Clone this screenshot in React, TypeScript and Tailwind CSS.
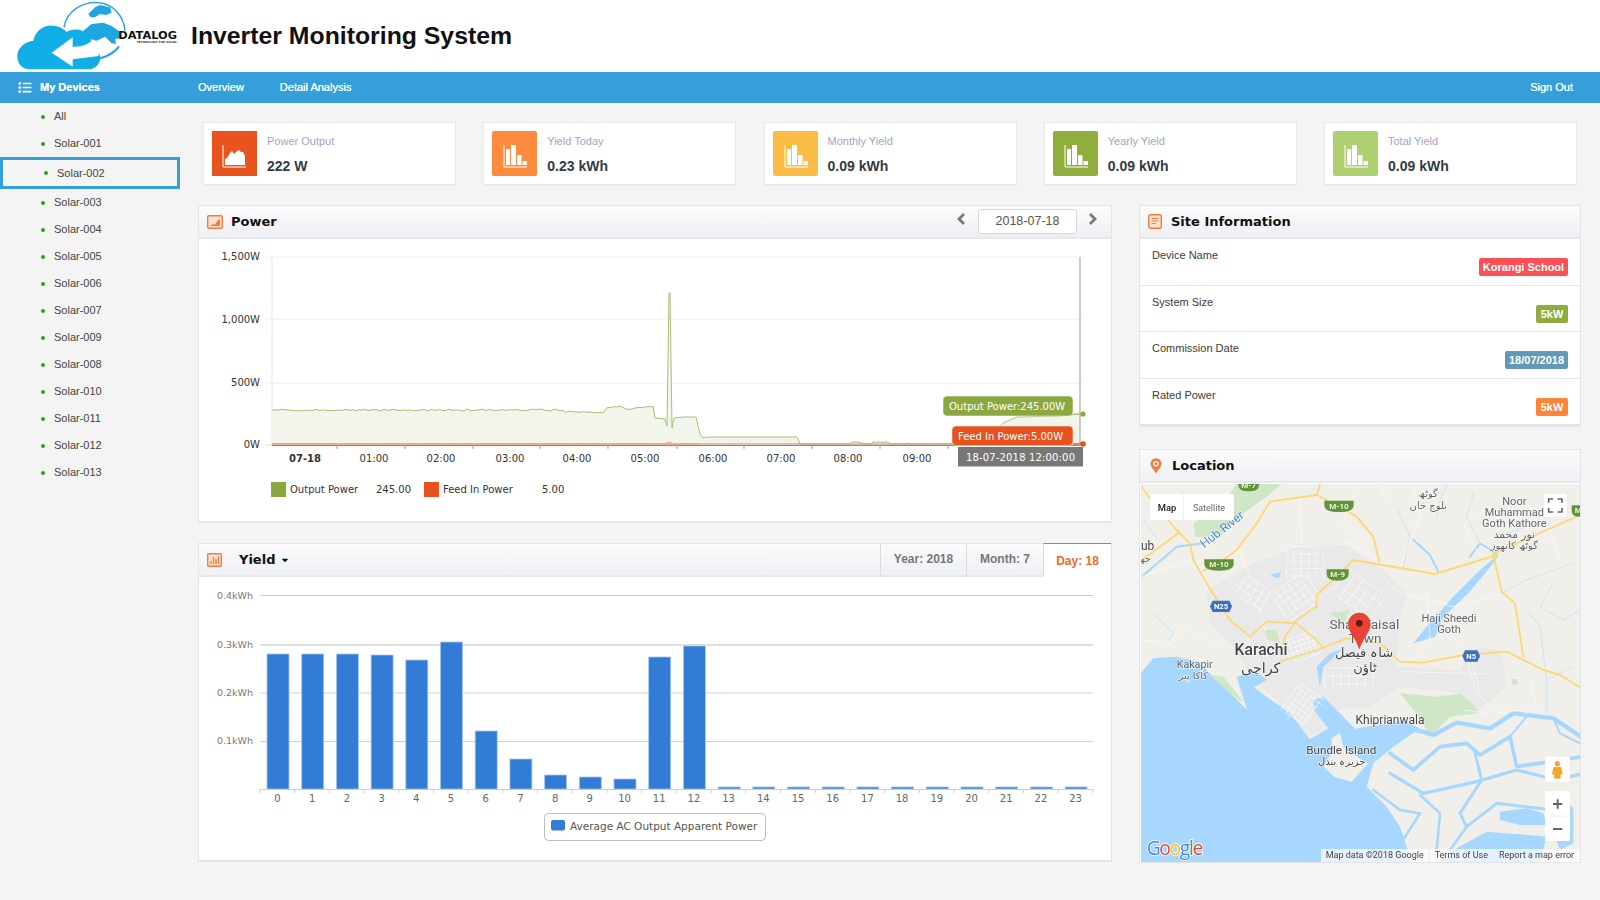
import React from "react";
import { FaList, FaCaretDown } from "react-icons/fa";

const DEJAVU = "'DejaVu Sans', sans-serif";
const ROBOTO = "Roboto, 'DejaVu Sans', sans-serif";

const devices = ["All","Solar-001","Solar-002","Solar-003","Solar-004","Solar-005","Solar-006","Solar-007","Solar-009","Solar-008","Solar-010","Solar-011","Solar-012","Solar-013"];

function Logo() {
  return (
    <svg viewBox="0 0 570 216" className="w-[190px] h-[72px] shrink-0">
      <path d="M192 82 C200 30 250 5 295 8 C340 10 372 50 375 92" fill="none" stroke="#2aa7e0" strokeWidth="4.5" />
      <path d="M265 42 L285 22 L300 15 L330 22 L335 38 L318 45 L300 42 L285 52 L272 52 Z" fill="#1fa6e0" />
      <path d="M250 92 L275 72 L310 68 L335 78 L360 95 L366 112 L345 118 L348 132 L335 130 L315 110 L290 122 L270 118 L255 108 Z" fill="#1fa6e0" />
      <path d="M300 178 C325 172 345 160 360 140 L354 138 C340 155 322 166 300 172 Z" fill="#1fa6e0" />
      <path d="M90 208 C65 208 52 190 52 168 C52 145 72 125 100 122 C105 95 130 75 155 77 C175 77 190 85 200 96 C215 85 250 85 265 108 C275 122 280 135 282 150 L300 165 C305 185 290 208 265 208 Z" fill="#11ade6" />
      <path d="M155 158 L218 112 L218 140 C240 142 262 136 280 118 L284 126 C290 140 298 150 296 168 L218 178 L218 200 Z" fill="#fff" />
      <text x="355" y="117" fontFamily={DEJAVU} fontWeight="700" fontSize="33" fill="#111" textLength="176" lengthAdjust="spacingAndGlyphs">DATALOG</text>
      <text x="410" y="129" fontFamily={DEJAVU} fontWeight="700" fontSize="8" fill="#333" textLength="120" lengthAdjust="spacingAndGlyphs">TECHNOLOGY FOR SOLAR</text>
    </svg>
  );
}

function AreaIcon() {
  return (
    <svg viewBox="0 0 45 45" className="w-[45px] h-[45px]">
      <path d="M11 14 V36 H34" stroke="#fff" strokeWidth="1" fill="none" />
      <path d="M13 34 V28 L15 27 L18 22 L20 20 L22 23 L25 20 L27 19 L29 21 L31 21 L33 25 V34 Z" fill="#fff" />
    </svg>
  );
}
function BarIcon() {
  return (
    <svg viewBox="0 0 45 45" className="w-[45px] h-[45px]">
      <path d="M12 14 V36 H35" stroke="#fff" strokeWidth="1" fill="none" />
      <rect x="14" y="18" width="4" height="16" fill="#fff" />
      <rect x="19" y="14" width="5" height="20" fill="#fff" />
      <rect x="25" y="24" width="4.5" height="10" fill="#fff" />
      <rect x="30.5" y="30" width="4.5" height="4" fill="#fff" />
    </svg>
  );
}

function StatCard({ color, label, value, area, rounded }: { color: string; label: string; value: string; area?: boolean; rounded?: boolean }) {
  return (
    <div className="w-[253px] h-[64px] bg-white border border-[#e8e8ee] border-b-2 pl-2 pt-2 flex gap-[10px]">
      <div className={"w-[45px] h-[45px] shrink-0 " + color + (rounded ? " rounded-[2px]" : "")}>{area ? <AreaIcon /> : <BarIcon />}</div>
      <div>
        <div className="text-[11px] leading-[14px] mt-[3px] text-[#a3a3c8]">{label}</div>
        <div className="text-[14px] leading-[16px] mt-[10px] font-bold text-[#333a45]">{value}</div>
      </div>
    </div>
  );
}

function PanelHeader({ children }: { children: React.ReactNode }) {
  return (
    <div className="h-[33px] flex items-center bg-linear-to-b from-[#fbfbfc] to-[#eff0f4] border-b-2 border-[#e6e8ee] shrink-0">
      {children}
    </div>
  );
}

const titleCls = "[font-family:'DejaVu_Sans',sans-serif] font-bold text-[13px] text-[#111] leading-none";

function hash(i: number) {
  const s = Math.sin(i * 12.9898) * 43758.5453;
  return s - Math.floor(s);
}

const powerPts: [number, number][] = (() => {
  const pts: [number, number][] = [];
  const base: [number, number][] = [[272,410],[560,410],[567,412],[603,412],[608,407],[620,407],[625,409],[640,408],[653,406]];
  for (let s = 0; s < base.length - 1; s++) {
    const [x0, y0] = base[s];
    const [x1, y1] = base[s + 1];
    for (let x = x0; x < x1; x += 3) {
      const t = (x - x0) / (x1 - x0);
      pts.push([x, y0 + (y1 - y0) * t + (hash(x) - 0.5) * 1.8]);
    }
  }
  const rest: [number, number][] = [[653,406],[655,418],[665,419],[667,426],[669,293],[670,293],[672,428],[674,418],[684,417],[696,417],[700,434],[703,438],[708,437],[730,437],[760,437],[797,437],[800,444],[850,444],[852,442],[858,442],[864,444],[871,444],[873,442],[888,442],[890,444],[905,444],[907,443],[909,444],[985,444],[1003,423],[1017,417],[1060,416],[1080,414]];
  return pts.concat(rest);
})();

function PowerChart() {
  const line = powerPts.map(p => p.join(",")).join(" ");
  const ticks = [337,405,473,540,608,677,744,812,880,948];
  const times: [string, number][] = [["01:00",374],["02:00",441],["03:00",510],["04:00",577],["05:00",645],["06:00",713],["07:00",781],["08:00",848],["09:00",917]];
  return (
    <svg viewBox="199 239 912 283" className="w-[912px] h-[283px] block" fontFamily={DEJAVU} fontSize="10">
      {[257,319,383].map(y => <line key={y} x1="266" x2="1083" y1={y} y2={y} stroke="#eeeeee" strokeWidth="1" />)}
      <line x1="266" x2="272" y1="445" y2="445" stroke="#ddd" />
      <line x1="272" x2="272" y1="257" y2="445" stroke="#e4e4e4" />
      <polygon points={`272,445 ${line} 1080,445`} fill="#f2f5ec" />
      <polyline points={line} fill="none" stroke="#a9c077" strokeWidth="1" />
      <line x1="272" x2="700" y1="444" y2="444" stroke="#f2a98c" strokeWidth="2" />
      <path d="M700 444 H1080" stroke="#c98a6b" strokeWidth="1" />
      <path d="M664 444 L669 442 L674 444" stroke="#f2a98c" fill="none" />
      <line x1="272" x2="1080" y1="445.5" y2="445.5" stroke="#888" strokeWidth="1" />
      {ticks.map(x => <line key={x} x1={x} x2={x} y1="445" y2="449" stroke="#999" />)}
      <line x1="1080" x2="1080" y1="257" y2="446" stroke="#bbb" strokeWidth="1.5" />
      <g fill="#333" textAnchor="end">
        <text x="260" y="260">1,500W</text>
        <text x="260" y="323">1,000W</text>
        <text x="260" y="386">500W</text>
        <text x="260" y="448">0W</text>
      </g>
      <g fill="#333" textAnchor="middle">
        <text x="305" y="462" fontWeight="700">07-18</text>
        {times.map(([t, x]) => <text key={t} x={x} y="462">{t}</text>)}
      </g>
      <rect x="271" y="482" width="15" height="15" fill="#8ba840" />
      <text x="290" y="493" fill="#333">Output Power</text>
      <text x="376" y="493" fill="#333">245.00</text>
      <rect x="424" y="482" width="15" height="15" fill="#e8521e" />
      <text x="443" y="493" fill="#333">Feed In Power</text>
      <text x="542" y="493" fill="#333">5.00</text>

      <rect x="943" y="396" width="130" height="20" rx="4" fill="#8ba840" stroke="#fff" strokeWidth="0.5" />
      <text x="949" y="410" fill="#fff">Output Power:245.00W</text>
      <line x1="1073" x2="1083" y1="414" y2="414" stroke="#a9c077" />
      <circle cx="1083" cy="414" r="2.6" fill="#8ba840" />
      <rect x="952" y="426" width="121" height="19.5" rx="4" fill="#e8521e" stroke="#fff" strokeWidth="0.5" />
      <text x="958" y="439.5" fill="#fff">Feed In Power:5.00W</text>
      <line x1="1073" x2="1083" y1="444" y2="444" stroke="#e8521e" />
      <circle cx="1083" cy="444" r="2.8" fill="#e8521e" />
      <rect x="958" y="447" width="125" height="19.5" fill="#777" />
      <text x="966" y="460.5" fill="#fff" textLength="109">18-07-2018 12:00:00</text>
    </svg>
  );
}

const yieldBars = [654,654,654,655,660,642,731,759,775,777,779,657,646,787,787,787,787,787,787,787,787,787,787,787];

function YieldChart() {
  const x0 = 260, step = 34.7;
  return (
    <svg viewBox="199 577 912 284" className="w-[912px] h-[284px] block" fontFamily={DEJAVU} fontSize="9.5">
      <line x1="260" x2="1093" y1="595.5" y2="595.5" stroke="#cccccc" />
      <line x1="260" x2="1093" y1="645" y2="645" stroke="#d4d4d4" strokeWidth="1.3" />
      <line x1="260" x2="1093" y1="693" y2="693" stroke="#e0e0e0" strokeWidth="1.5" />
      <line x1="260" x2="1093" y1="741.5" y2="741.5" stroke="#d0d0d0" />
      <g fill="#777" textAnchor="end">
        <text x="253" y="598.5">0.4kWh</text>
        <text x="253" y="648">0.3kWh</text>
        <text x="253" y="696">0.2kWh</text>
        <text x="253" y="744">0.1kWh</text>
      </g>
      {yieldBars.map((top, i) => (
        <rect key={i} x={x0 + step * i + 7} y={top} width="22" height={789 - top} fill="#337cd6" stroke="#a9c6ec" strokeWidth="0.8" />
      ))}
      <line x1="260" x2="1093" y1="789.5" y2="789.5" stroke="#c0d0e0" />
      {Array.from({ length: 25 }, (_, i) => (
        <line key={i} x1={x0 + step * i} x2={x0 + step * i} y1="789" y2="793" stroke="#c0d0e0" />
      ))}
      <g fill="#666" textAnchor="middle" fontSize="10">
        {yieldBars.map((_, i) => <text key={i} x={x0 + step * i + 17.5} y="802">{i}</text>)}
      </g>
      <rect x="544.5" y="813.5" width="221" height="27" rx="4" fill="#fff" stroke="#bbb" />
      <rect x="551" y="820" width="14" height="10.5" rx="2" fill="#337cd6" />
      <text x="570" y="830" fontSize="10.5" fill="#555">Average AC Output Apparent Power</text>
    </svg>
  );
}

function cluster(cx: number, cy: number, w: number, h: number, step: number, angle: number) {
  const out: React.ReactNode[] = [];
  for (let x = -w / 2; x <= w / 2; x += step) out.push(<line key={"v" + x} x1={x} x2={x} y1={-h / 2 + (hash(x) * h) / 5} y2={h / 2 - (hash(x + 3) * h) / 5} />);
  for (let y = -h / 2; y <= h / 2; y += step) out.push(<line key={"h" + y} x1={-w / 2 + (hash(y) * w) / 5} x2={w / 2 - (hash(y + 3) * w) / 5} y1={y} y2={y} />);
  return <g key={`${cx}-${cy}`} transform={`translate(${cx},${cy}) rotate(${angle})`}>{out}</g>;
}

function Shield({ x, y, w, text }: { x: number; y: number; w: number; text: string }) {
  return (
    <g>
      <path d={`M${x} ${y} H${x + w} V${y + 14} Q${x + w} ${y + 34} ${x + w / 2} ${y + 34} Q${x} ${y + 34} ${x} ${y + 14} Z`} fill="#5f9438" />
      <text x={x + w / 2} y={y + 24} textAnchor="middle" fontSize="24" fontWeight="700" fill="#e8f3dc" fontFamily={ROBOTO}>{text}</text>
    </g>
  );
}
function Hex({ x, y, w, text }: { x: number; y: number; w: number; text: string }) {
  return (
    <g>
      <path d={`M${x + 8} ${y} H${x + w - 8} L${x + w} ${y + 17} L${x + w - 8} ${y + 34} H${x + 8} L${x} ${y + 17} Z`} fill="#3a6fc4" />
      <text x={x + w / 2} y={y + 25} textAnchor="middle" fontSize="23" fontWeight="700" fill="#fff" fontFamily={ROBOTO}>{text}</text>
    </g>
  );
}
function L({ x, y, s = 30, t, fill = "#5f6368", weight = 400, anchor = "middle", rot }: { x: number; y: number; s?: number; t: string; fill?: string; weight?: number; anchor?: "middle" | "start"; rot?: number }) {
  return (
    <text x={x} y={y} fontSize={s} fontWeight={weight} fill={fill} textAnchor={anchor} stroke="#ffffff" strokeOpacity="0.7" strokeWidth="4" paintOrder="stroke" transform={rot ? `rotate(${rot} ${x} ${y})` : undefined}>{t}</text>
  );
}

function MapView() {
  const sea = "#a7d7fe";
  return (
    <svg viewBox="93 12 1317 1134" preserveAspectRatio="none" className="w-[439px] h-[378px] block blur-[0.35px]" fontFamily={ROBOTO}>
      <rect x="93" y="12" width="1317" height="1134" fill="#f1efea" />
      <path d="M250 130 L340 70 L380 12 L515 12 L470 50 L400 100 L330 170 L255 170 Z" fill="#cfe7c6" />
      <path d="M870 640 L980 650 L1060 640 L1110 700 L1020 710 L960 770 L920 700 Z" fill="#cfe7c6" />
      <path d="M290 330 L430 250 L560 200 L700 190 L820 270 L890 340 L870 420 L860 560 L1050 570 L1100 500 L1170 510 L1190 620 L1110 690 L1050 640 L870 620 L780 680 L680 690 L650 740 L600 770 L520 680 L430 600 L370 500 L300 430 Z" fill="#e9e9e9" />
      <path d="M660 400 L720 390 L700 430 Z M460 450 L500 450 L510 490 L470 480 Z" fill="#cfe7c6" />
      <rect x="1205" y="597" width="17" height="17" fill="#cfe7c6" />
      <path d="M93 578 L130 535 L200 530 L265 545 L310 590 L412 690 L395 640 L380 590 L440 575 L470 600 L432 622 L470 650 L540 700 L600 778 L655 745 L615 695 L608 660 L640 650 L690 700 L740 752 L790 740 L880 722 L930 745 L850 800 L790 850 L770 920 L830 980 L870 1040 L905 1146 L93 1146 Z" fill={sea} />
      <path d="M665 775 L690 758 L700 800 L740 830 L775 850 L725 905 L672 890 L640 858 L665 820 Z" fill="#f1efea" />
      <path d="M300 585 L340 590 L400 665 L385 660 Z" fill="#cfe7c6" />
      <g transform="translate(690,0)" fill="none" stroke={sea} strokeLinejoin="round" strokeLinecap="round">
        <path strokeWidth="13" d="M20 760 Q150 720 280 765 L350 728 L450 745 L520 700 L640 715 L730 775" />
        <path strokeWidth="11" d="M150 820 L220 870 L300 800 L380 790 L420 825 L510 770 L530 860 L730 830" />
        <path strokeWidth="10" d="M150 880 L250 940 L410 905 L530 870 L650 900 L730 880" />
        <path strokeWidth="9" d="M405 820 L425 900 L360 1000 L380 1040 L470 970 L640 990 L690 980" />
        <path strokeWidth="8" d="M240 945 L300 1000 L290 1110 M100 930 L180 990 L240 1000 L170 1110 M380 1040 L330 1110" />
        <path strokeWidth="6" d="M640 715 L660 760 L720 790 M510 770 L560 710" />
        <path fill={sea} stroke="none" d="M480 995 L560 985 L610 1000 L620 1035 L540 1035 L480 1020 Z M670 990 L700 980 L700 1090 L660 1110 L640 1060 Z M340 1110 L440 1055 L620 1070 L600 1146 L300 1146 Z" />
        <path fill={sea} stroke="none" d="M220 490 L260 440 L340 350 L420 270 L480 220 L450 262 L385 340 L310 410 L285 470 Z" />
        <path strokeWidth="6" d="M220 180 L270 225 L295 275 M470 220 L420 190 L390 230" />
        <path strokeWidth="2.5" opacity="0.6" d="M480 340 L560 300 L700 250 M560 390 L600 440 L620 600 L620 700 M500 160 L590 130 M400 40 L380 110 L420 190 M170 80 L210 170 L190 260 M640 310 L600 380 L670 420 L720 390 M620 600 L700 560 M290 110 L300 60 L320 12" />
      </g>
      <path d="M95 290 L200 200 L280 190" fill="none" stroke={sea} strokeWidth="6" />
      <path d="M100 120 L140 175 M130 400 L190 460 L170 490" fill="none" stroke="#bfe0ff" strokeWidth="2.5" />
      <path d="M480 285 L515 275 L505 295 Z" fill={sea} />
      <path d="M620 560 L660 520 L700 505 L640 560 L630 620 Z" fill={sea} />
      <g stroke="#fbfbfb" strokeWidth="2" fill="none" strokeLinecap="round">
        {cluster(585, 250, 110, 100, 22, 0)}
        {cluster(560, 350, 120, 100, 20, -35)}
        {cluster(580, 500, 100, 70, 14, -20)}
        {cluster(745, 345, 140, 90, 28, 35)}
        {cluster(720, 600, 150, 70, 24, 0)}
        {cluster(575, 680, 90, 110, 16, 35)}
        {cluster(430, 340, 90, 70, 22, 30)}
        <path d="M320 260 L390 210 L420 290 M300 360 L370 300 L450 390 L480 520 M570 50 L575 190 M640 200 L720 190 L800 240 M820 300 L880 340 L1030 380 L1170 345 M950 340 L960 470 L900 560 M1060 500 L1100 640 L1170 700 L1280 680 L1260 600 M880 575 L1130 582 M1080 520 L1110 640 M93 290 L240 240 M93 480 L180 490 L220 440 L330 500 M1100 210 L1060 130 L1150 80 M1310 130 L1350 240 M740 20 L700 130 L790 230 M870 260 L930 110 L910 20 M810 12 L830 60 M1060 690 L1130 700" />
      </g>
      <g stroke="#fcd873" strokeWidth="5.5" fill="none" strokeLinejoin="round" strokeLinecap="round">
        <path d="M95 20 L130 70 L200 150 L240 190 L250 240 L290 310 L360 420 L420 470 L470 425 L560 430 L620 480 L640 505" />
        <path d="M95 240 L150 200 L205 160" />
        <path d="M630 15 L620 45 L480 65 L440 130 L380 210 L320 255 L280 272" />
        <path d="M620 45 L680 75 L740 110 L790 170 L808 245" />
        <path d="M1160 225 L975 282 L730 240 L680 290 L620 345 L620 380 L560 420 L525 470 L520 490" />
        <path d="M1150 225 L1175 335 L1215 370 L1240 530" />
        <path d="M510 545 L620 510 L710 475 L810 490 L870 545 L940 548 L1060 525 L1190 515 L1300 570 L1350 585 L1410 622" />
        <path d="M1150 222 L1310 150 L1410 105" />
      </g>
      <Shield x={385} y={0} w={62} text="M-7" />
      <Shield x={643} y={62} w={88} text="M-10" />
      <Shield x={283} y={238} w={88} text="M-10" />
      <Shield x={650} y={268} w={66} text="M-9" />
      <Shield x={1385} y={76} w={40} text="M" />
      <Hex x={300} y={362} w={66} text="N25" />
      <Hex x={1057} y={511} w={53} text="N5" />
      <L x={763} y={447} s={41} t="Shah Faisal" />
      <L x={765} y={490} s={41} t="Town" />
      <g fontFamily={DEJAVU}>
        <L x={762} y={532} s={39} t="شاہ فیصل" fill="#444" />
        <L x={765} y={576} s={39} t="ٹاؤن" fill="#444" />
        <L x={452} y={578} s={43} t="کراچی" fill="#444" />
        <L x={250} y={597} s={29} t="کاکا پیر" />
        <L x={695} y={856} s={30} t="جزیرہ بندل" fill="#444" />
        <L x={1213} y={175} s={32} t="نور محمد" />
        <L x={1213} y={207} s={30} t="گوٹھ کاتھوز" />
        <L x={955} y={52} s={30} t="گوٹھ" />
        <L x={955} y={87} s={30} t="بلوچ خان" />
        <L x={105} y={246} s={28} t="جھ" />
      </g>
      <L x={453} y={524} s={47} t="Karachi" fill="#444" weight={500} />
      <L x={254} y={563} s={32} t="Kakapir" />
      <L x={1213} y={76} s={33} t="Noor" />
      <L x={1213} y={108} s={33} t="Muhammad" />
      <L x={1213} y={140} s={33} t="Goth Kathore" />
      <L x={1017} y={425} s={33} t="Haji Sheedi" />
      <L x={1017} y={458} s={33} t="Goth" />
      <L x={840} y={733} s={36} t="Khiprianwala" fill="#444" />
      <L x={694} y={822} s={35} t="Bundle Island" fill="#444" />
      <L x={93} y={210} s={36} t="ub" anchor="start" fill="#444" />
      <L x={283} y={205} s={36} t="Hub River" anchor="start" fill="#4a86cf" rot={-38} />
      <path d="M748 506 C736 470 715 456 715 432 A33 33 0 1 1 781 432 C781 456 760 470 748 506 Z" fill="#ea4335" stroke="#c9302a" strokeWidth="1.5" />
      <circle cx="748" cy="430" r="10" fill="#5c1a12" />
      <rect x="120" y="42" width="252" height="78" rx="5" fill="#fff" />
      <line x1="220" x2="220" y1="42" y2="120" stroke="#e6e6e6" strokeWidth="2" />
      <text x="171" y="93" textAnchor="middle" fontSize="28" fontWeight="500" fill="#222">Map</text>
      <text x="297" y="93" textAnchor="middle" fontSize="27" fill="#666">Satellite</text>
      <rect x="1302" y="42" width="68" height="68" fill="#fff" />
      <path d="M1316 68 V57 H1329 M1343 57 H1356 V68 M1316 84 V96 H1329 M1343 96 H1356 V84" fill="none" stroke="#666" strokeWidth="5" />
      <rect x="1305" y="830" width="75" height="75" rx="5" fill="#fff" />
      <circle cx="1342" cy="851" r="8" fill="#f5a623" />
      <path d="M1331 862 H1353 L1357 882 L1351 884 V895 H1333 V884 L1327 882 Z" fill="#f5a623" stroke="#d98c10" strokeWidth="1" />
      <rect x="1305" y="933" width="75" height="150" rx="5" fill="#fff" />
      <line x1="1317" x2="1368" y1="1008" y2="1008" stroke="#e6e6e6" strokeWidth="2" />
      <path d="M1343 958 V986 M1329 972 H1357 M1329 1047 H1357" stroke="#666" strokeWidth="6" />
      <rect x="633" y="1107" width="777" height="39" fill="#ffffff" fillOpacity="0.7" />
      <line x1="958" x2="958" y1="1107" y2="1146" stroke="#e6e6e6" strokeWidth="2" />
      <line x1="1150" x2="1150" y1="1107" y2="1146" stroke="#e6e6e6" strokeWidth="2" />
      <text x="647" y="1133" fontSize="27" fill="#444">Map data ©2018 Google</text>
      <text x="974" y="1133" fontSize="27" fill="#444">Terms of Use</text>
      <text x="1167" y="1133" fontSize="27" fill="#444">Report a map error</text>
      <text x="110" y="1125" fontSize="58" fontWeight="500" fontFamily="'Open Sans', sans-serif" stroke="#fff" strokeWidth="5" paintOrder="stroke" textLength="170">
        <tspan fill="#4285f4">G</tspan><tspan fill="#ea4335">o</tspan><tspan fill="#fbbc05">o</tspan><tspan fill="#4285f4">g</tspan><tspan fill="#34a853">l</tspan><tspan fill="#ea4335">e</tspan>
      </text>
    </svg>
  );
}

function Row({ label, badge, color, h, w }: { label: string; badge: string; color: string; h: string; w: string }) {
  return (
    <div className={"px-[12px] pt-[9px] flex flex-col border-b border-[#e6e6ee] " + h}>
      <div className="h-[10px] text-[11px] leading-[14px] text-[#3b3b3b]">{label}</div>
      <div className={"self-end h-[18px] rounded-[2px] text-white font-bold text-[11px] leading-[18px] text-center " + color + " " + w}>{badge}</div>
    </div>
  );
}

function Chev({ d, cls }: { d: string; cls: string }) {
  return (
    <svg viewBox="0 0 9 12" className={"w-[9px] h-[12px] " + cls}>
      <path d={d} fill="none" stroke="#777" strokeWidth="2.8" />
    </svg>
  );
}

export default function App() {
  return (
    <div className="min-h-screen bg-[#f4f4f5] [font-family:'Liberation_Sans',Arial,sans-serif]">
      <header className="h-[72px] bg-white flex items-start">
        <Logo />
        <h1 className="mt-[20px] ml-[1px] text-[24.8px] leading-[32px] font-bold text-[#111] whitespace-nowrap">Inverter Monitoring System</h1>
      </header>
      <nav className="h-[31px] bg-[#359fdb] flex items-center text-white text-[11px] [text-shadow:0_0_0.6px_#fff]">
        <div className="w-[198px] flex items-center pl-[18px] gap-[8px] font-bold">
          <FaList className="w-[14px] h-[13px]" />
          <span>My Devices</span>
        </div>
        <span>Overview</span>
        <span className="ml-[36px]">Detail Analysis</span>
        <span className="ml-auto mr-[27px]">Sign Out</span>
      </nav>
      <div className="flex items-start">
        <aside className="w-[180px] shrink-0 text-[11px] text-[#444]">
          {devices.map(d =>
            d === "Solar-002" ? (
              <div key={d} className="h-[32px] border-[3px] border-[#359fdb] flex items-center pl-[41px] gap-[9px]">
                <span className="w-[4px] h-[4px] rounded-full bg-[#2f9e1f]" />
                <span>{d}</span>
              </div>
            ) : (
              <div key={d} className="h-[27px] flex items-center pl-[41px] gap-[9px]">
                <span className="w-[4px] h-[4px] rounded-full bg-[#2f9e1f]" />
                <span>{d}</span>
              </div>
            )
          )}
        </aside>
        <main className="ml-[18px] w-[1383px] pt-[19px]">
          <div className="ml-[5px] w-[1374px] flex justify-between">
            <StatCard color="bg-[#e8531e]" label="Power Output" value="222 W" area />
            <StatCard color="bg-[#fd8b3e]" label="Yield Today" value="0.23 kWh" rounded />
            <StatCard color="bg-[#fcbd45]" label="Monthly Yield" value="0.09 kWh" rounded />
            <StatCard color="bg-[#8fae3c]" label="Yearly Yield" value="0.09 kWh" rounded />
            <StatCard color="bg-[#afd070]" label="Total Yield" value="0.09 kWh" rounded />
          </div>
          <div className="mt-[19px] flex gap-[27px] items-start">
            <div className="w-[914px] flex flex-col gap-[20px]">
              <section className="h-[318px] bg-white border border-[#e4e4e9] border-b-2 overflow-hidden">
                <PanelHeader>
                  <svg viewBox="0 0 16 14" className="w-[16px] h-[14px] ml-[8px]">
                    <rect x="0.7" y="0.7" width="14.6" height="12.6" rx="1.2" fill="#fde3d2" stroke="#f47c3c" strokeWidth="1.4" />
                    <path d="M3 11 L6 9 L8 9.5 L11 5 L13 4 V11 Z" fill="#f47c3c" />
                  </svg>
                  <span className={titleCls + " ml-[8px]"}>Power</span>
                  <div className="ml-auto flex items-center">
                    <Chev d="M7 1 L2 6 L7 11" cls="-mt-[5px]" />
                    <div className="ml-[12px] w-[99px] h-[25px] bg-white border border-[#d8d8d8] rounded-[3px] text-center text-[12.5px] leading-[23px] text-[#555]">2018-07-18</div>
                    <Chev d="M2 1 L7 6 L2 11" cls="ml-[11px] mr-[14px] -mt-[5px]" />
                  </div>
                </PanelHeader>
                <PowerChart />
              </section>
              <section className="h-[319px] bg-white border border-[#e4e4e9] border-b-2">
                <PanelHeader>
                  <svg viewBox="0 0 15 14" className="w-[15px] h-[14px] ml-[8px]">
                    <rect x="0.7" y="0.7" width="13.6" height="12.6" rx="1" fill="#fde3d2" stroke="#f47c3c" strokeWidth="1.4" />
                    <path d="M4 11 V8 M6.5 11 V4 M9 11 V6 M11.5 11 V3.5" stroke="#f47c3c" strokeWidth="1.4" />
                  </svg>
                  <span className={titleCls + " ml-[17px]"}>Yield</span>
                  <FaCaretDown className="ml-[5px] w-[10px] h-[10px] text-[#111]" />
                  <div className="ml-auto h-[34px] -mt-px flex text-[12px] font-bold text-[#777] self-start">
                    <div className="w-[86px] border-l border-[#dcdcdc] flex items-center justify-center pb-[2px]">Year: 2018</div>
                    <div className="w-[77px] border-l border-[#dcdcdc] flex items-center justify-center pb-[2px]">Month: 7</div>
                    <div className="w-[68px] bg-white border-l border-[#dcdcdc] border-t-[1.5px] border-t-[#f26a1b] text-[#f26a1b] flex items-center justify-center">Day: 18</div>
                  </div>
                </PanelHeader>
                <YieldChart />
              </section>
            </div>
            <div className="w-[442px] flex flex-col gap-[22px]">
              <section className="bg-white border border-[#e4e4e9] border-b-[3px]">
                <PanelHeader>
                  <svg viewBox="0 0 14 15" className="w-[14px] h-[15px] ml-[8px]">
                    <rect x="0.7" y="0.7" width="12.6" height="13.6" rx="2" fill="#fde3d2" stroke="#f47c3c" strokeWidth="1.4" />
                    <path d="M3.5 4.5 H10.5 M3.5 7 H10.5 M3.5 9.5 H8" stroke="#f47c3c" strokeWidth="1.1" />
                  </svg>
                  <span className={titleCls + " ml-[9px]"}>Site Information</span>
                </PanelHeader>
                <Row label="Device Name" badge="Korangi School" color="bg-[#fc5056]" h="h-[47px]" w="w-[89px]" />
                <Row label="System Size" badge="5kW" color="bg-[#8fac3e]" h="h-[46px]" w="w-[32px]" />
                <Row label="Commission Date" badge="18/07/2018" color="bg-[#6299b7]" h="h-[47px]" w="w-[63px]" />
                <div className="h-[45px] px-[12px] pt-[9px] flex flex-col">
                  <div className="h-[10px] text-[11px] leading-[14px] text-[#3b3b3b]">Rated Power</div>
                  <div className="self-end w-[32px] h-[18px] rounded-[2px] text-white font-bold text-[11px] leading-[18px] text-center bg-[#fd8438]">5kW</div>
                </div>
              </section>
              <section className="h-[414px] bg-white border border-[#e4e4e9] overflow-hidden">
                <PanelHeader>
                  <svg viewBox="0 0 12 16" className="w-[12px] h-[16px] ml-[10px]">
                    <path d="M6 15.5 C3.5 11 0.5 9 0.5 5.7 A5.5 5.5 0 0 1 11.5 5.7 C11.5 9 8.5 11 6 15.5 Z" fill="#f47c3c" />
                    <circle cx="6" cy="5.7" r="2.8" fill="#fff" />
                    <circle cx="6" cy="5.7" r="1.4" fill="#f47c3c" />
                  </svg>
                  <span className={titleCls + " ml-[10px]"}>Location</span>
                </PanelHeader>
                <div className="pl-[1px] pt-[1px]">
                  <MapView />
                </div>
              </section>
            </div>
          </div>
        </main>
      </div>
    </div>
  );
}
